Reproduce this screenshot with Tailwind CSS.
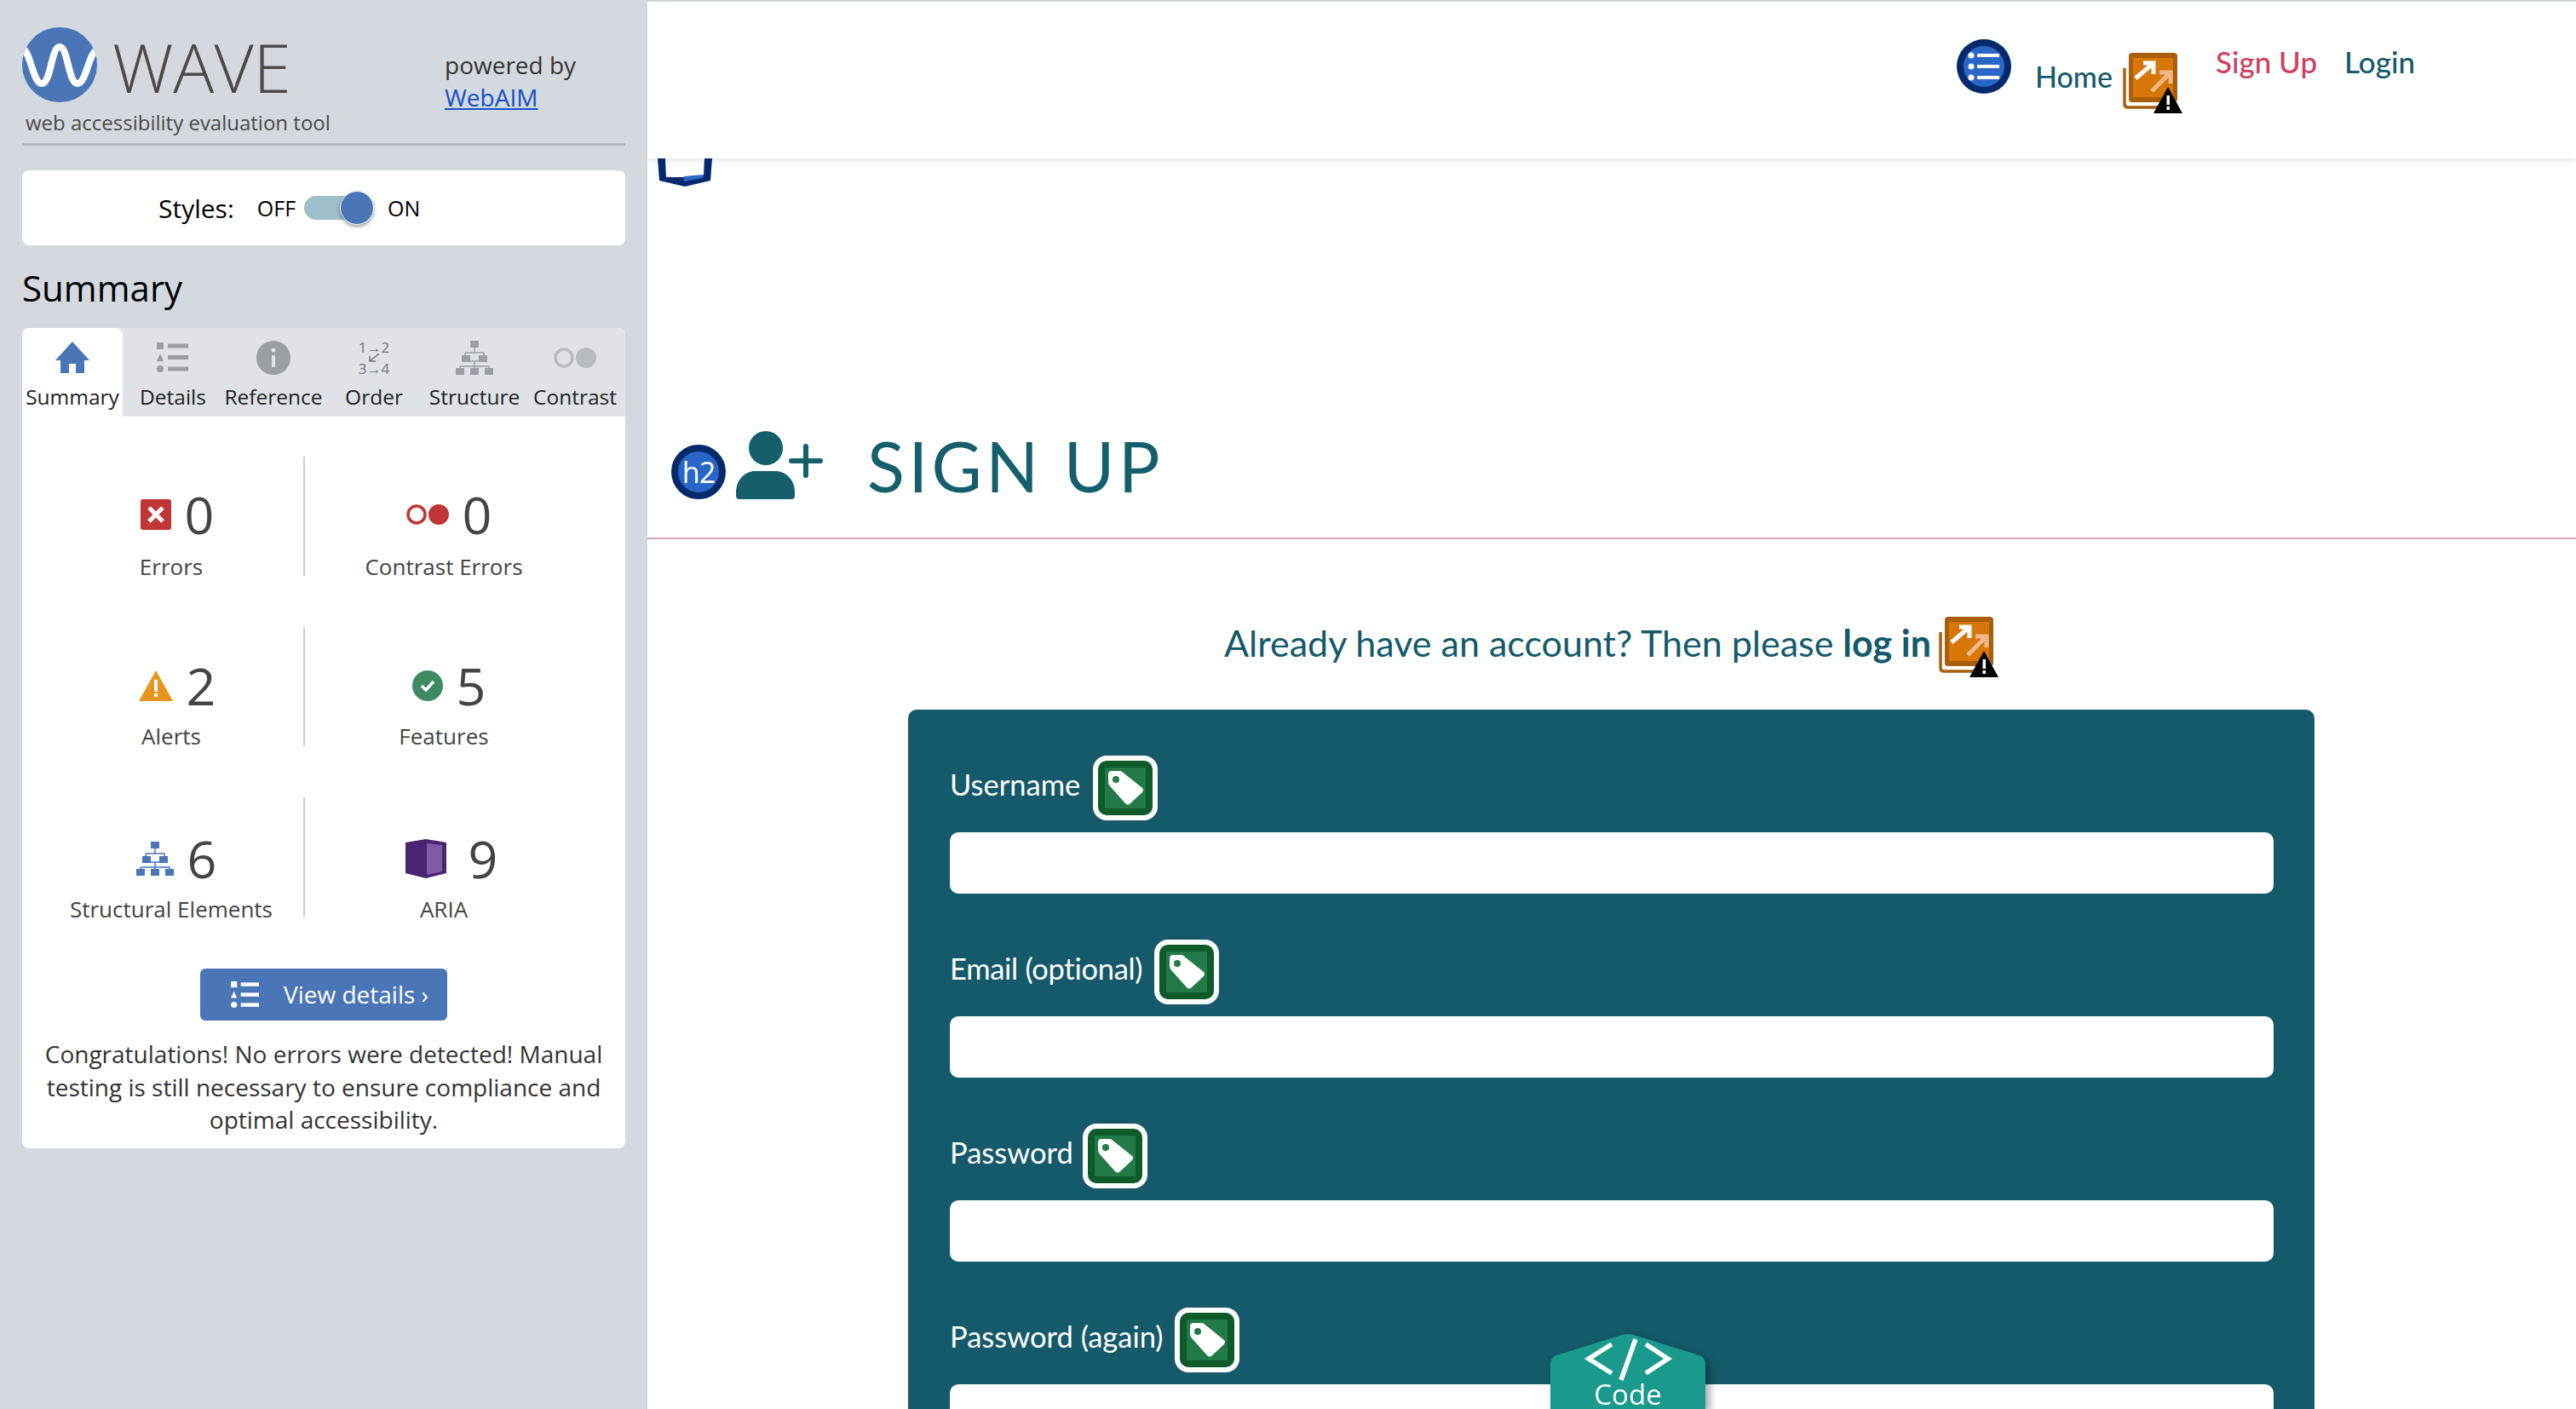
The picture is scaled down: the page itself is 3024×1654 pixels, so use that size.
<!DOCTYPE html>
<html lang="en">
<head>
    <meta charset="UTF-8">
    <title>Sign Up</title>
    <script src="https://cdn.jsdelivr.net/npm/@tailwindcss/browser@4"></script>
</head>
<body class="bg-white">
    <svg width="0" height="0" class="absolute">
        <defs>
            <symbol id="tag" viewBox="0 0 76 76">
                <rect width="76" height="76" rx="16" fill="#fff"/>
                <rect x="6" y="6" width="64" height="64" rx="10" fill="#0d5a2b"/>
                <rect x="14" y="14" width="48" height="48" fill="#217a48"/>
                <path d="M22 18H33L58 38Q60 40 58 43L44 56Q41 59 38 56L21 37Q18 34 18 31V22Q18 18 22 18Z" fill="#fff"/>
                <circle cx="27" cy="28" r="4" fill="#217a48"/>
            </symbol>
            <symbol id="external" viewBox="0 0 72 72">
                <path d="M3 18V60Q3 64 7 64H44" fill="none" stroke="#a85e0c" stroke-width="3.5"/>
                <rect x="8" y="0" width="57" height="58" rx="4" fill="#a85e0c"/>
                <rect x="13" y="6" width="47" height="46" fill="#d9760a"/>
                <path d="M37 25L57 8M46 7H58V20" transform="translate(-21 5)" fill="none" stroke="#fff" stroke-width="5"/>
                <path d="M35 45L56 24M44 23H57V36" fill="none" stroke="#f0b98a" stroke-width="5"/>
                <path d="M54 40L71 71H37Z" fill="#000"/>
                <rect x="52.500" y="50" width="3.500" height="11" fill="#fff"/>
                <rect x="52.500" y="63" width="3.500" height="4" fill="#fff"/>
            </symbol>
            <symbol id="structure" viewBox="0 0 44 40">
                <path d="M22 6V14M11 14H33V24M11 14V24M22 24V30M5 30H39V34M5 30V34M22 30V34M11 24H33" fill="none" stroke="currentColor" stroke-width="1.500"/>
                <rect x="17" y="0" width="10" height="8" fill="currentColor"/>
                <rect x="7" y="17" width="10" height="8" fill="currentColor"/>
                <rect x="27" y="17" width="10" height="8" fill="currentColor"/>
                <rect x="0" y="32" width="10" height="8" fill="currentColor"/>
                <rect x="17" y="32" width="10" height="8" fill="currentColor"/>
                <rect x="34" y="32" width="10" height="8" fill="currentColor"/>
            </symbol>
            <symbol id="details" viewBox="0 0 38 36">
                <rect x="0" y="0" width="8" height="8" fill="currentColor"/>
                <path d="M4 13L8 22H0Z" fill="currentColor"/>
                <circle cx="4" cy="31" r="4" fill="currentColor"/>
                <rect x="13" y="1.500" width="24" height="5" fill="currentColor"/>
                <rect x="13" y="15" width="24" height="5" fill="currentColor"/>
                <rect x="13" y="28.500" width="24" height="5" fill="currentColor"/>
            </symbol>
        </defs>
    </svg>

    <div class="flex h-[1654px] w-[3024px] overflow-hidden">

        <!-- wave sidebar -->
        <div class="w-[760px] h-full shrink-0 bg-[#d3d9de] px-[26px] pt-[32px] font-['Open_Sans',sans-serif]">
            <div class="flex h-[139px] border-b-[3px] border-[#b3b9be]">
                <div class="w-[496px]">
                    <div class="flex">
                        <svg width="88" height="88" viewBox="0 0 88 88" class="shrink-0">
                            <defs><clipPath id="logoClip"><circle cx="44" cy="44" r="44"/></clipPath></defs>
                            <circle cx="44" cy="44" r="44" fill="#4a76b8"/>
                            <path clip-path="url(#logoClip)" d="M-2 24C10 24 12 66 23 66C34 66 34 23 44 23C54 23 54 66 65 66C76 66 78 26 90 26" fill="none" stroke="#fff" stroke-width="8"/>
                        </svg>
                        <span class="ml-[18px] text-[80px] leading-[92px] font-light text-[#4a4a4a]">WAVE</span>
                    </div>
                    <p class="ml-1 mt-[5px] text-[24px] leading-[30px] text-[#4a4a4a]">web accessibility evaluation tool</p>
                </div>
                <div class="pt-[25px] text-[28px] leading-[38px] text-[#333]">
                    <p>powered by</p>
                    <a href="#" class="text-[#1450c8] underline">WebAIM</a>
                </div>
            </div>

            <div class="mt-[29px] h-[88px] rounded-lg bg-white flex items-center pl-[160px]">
                <span class="text-[30px] text-black">Styles:</span>
                <span class="ml-[27px] mt-[1px] text-[25px] text-black">OFF</span>
                <div class="relative ml-[10px] w-[62px] h-[28px] rounded-full bg-[#9fc0cb]">
                    <div class="absolute left-[42px] -top-[6px] w-[40px] h-[40px] rounded-full bg-[#4a76b8] border border-white shadow-[0_2px_4px_rgba(0,0,0,0.4)]"></div>
                </div>
                <span class="ml-[36px] mt-[1px] text-[25px] text-black">ON</span>
            </div>

            <h2 class="mt-[20px] mb-[17px] text-[42px] leading-[60px] text-black">Summary</h2>

            <div class="rounded-lg bg-white">
                <div class="flex h-[104px] rounded-t-lg bg-[#dfe3e7] text-[24.5px] leading-[30px] text-[#222]">
                    <div class="w-[118px] rounded-t-lg bg-white flex flex-col items-center pt-[15px]">
                        <svg width="40" height="40" viewBox="0 0 40 40"><path d="M20 1L40 23H34V38H24V27H16V38H6V23H0Z" fill="#4a76b8"/></svg>
                        <span class="mt-[11px]">Summary</span>
                    </div>
                    <div class="w-[118px] flex flex-col items-center pt-[15px]">
                        <svg width="38" height="40" class="text-[#999fa5]"><use href="#details"/></svg>
                        <span class="mt-[11px]">Details</span>
                    </div>
                    <div class="w-[118px] flex flex-col items-center pt-[15px]">
                        <svg width="40" height="40" viewBox="0 0 40 40">
                            <circle cx="20" cy="20" r="20" fill="#9a9fa4"/>
                            <rect x="18" y="17" width="4" height="14" fill="#dfe3e7"/>
                            <circle cx="20" cy="11" r="2.500" fill="#dfe3e7"/>
                        </svg>
                        <span class="mt-[11px]">Reference</span>
                    </div>
                    <div class="w-[118px] flex flex-col items-center pt-[15px]">
                        <div class="h-[40px] flex flex-col items-center text-[17px] leading-[15px] font-medium text-[#70767c]">
                            <span>1→2</span>
                            <svg width="16" height="10" viewBox="0 0 16 10" class="block"><path d="M14 0L3 9M3 3V9H10" fill="none" stroke="#70767c" stroke-width="1.500"/></svg>
                            <span>3→4</span>
                        </div>
                        <span class="mt-[11px]">Order</span>
                    </div>
                    <div class="w-[118px] flex flex-col items-center pt-[15px]">
                        <svg width="44" height="40" class="text-[#999fa5]"><use href="#structure"/></svg>
                        <span class="mt-[11px]">Structure</span>
                    </div>
                    <div class="w-[118px] flex flex-col items-center pt-[15px]">
                        <svg width="50" height="40" viewBox="0 0 50 40">
                            <circle cx="12" cy="20" r="10" fill="none" stroke="#b7bcc0" stroke-width="3.500"/>
                            <circle cx="38" cy="20" r="12" fill="#b7bcc0"/>
                        </svg>
                        <span class="mt-[11px]">Contrast</span>
                    </div>
                </div>

                <div class="pl-[20px] pt-[47px] grid grid-cols-[312px_326px] gap-y-[60px] text-[#444]">
                    <div class="h-[140px] border-r-2 border-[#c9ced2] flex flex-col items-center pt-[33px]">
                        <div class="ml-[14px] flex items-center gap-[16px] h-[70px]">
                            <svg width="36" height="36" viewBox="0 0 36 36">
                                <rect width="36" height="36" rx="3" fill="#c03535"/>
                                <path d="M10 10L26 26M26 10L10 26" stroke="#fff" stroke-width="5"/>
                            </svg>
                            <span class="text-[61px] leading-[70px]">0</span>
                        </div>
                        <span class="mt-[12px] text-[26px] leading-[28px]">Errors</span>
                    </div>
                    <div class="h-[140px] flex flex-col items-center pt-[33px]">
                        <div class="ml-[12px] flex items-center gap-[16px] h-[70px]">
                            <svg width="50" height="24" viewBox="0 0 50 24">
                                <circle cx="12" cy="12" r="10" fill="none" stroke="#c03535" stroke-width="3.500"/>
                                <circle cx="38" cy="12" r="12" fill="#c03535"/>
                            </svg>
                            <span class="text-[61px] leading-[70px]">0</span>
                        </div>
                        <span class="mt-[12px] text-[26px] leading-[28px]">Contrast Errors</span>
                    </div>
                    <div class="h-[140px] border-r-2 border-[#c9ced2] flex flex-col items-center pt-[34px]">
                        <div class="ml-[14px] flex items-center gap-[16px] h-[70px]">
                            <svg width="40" height="36" viewBox="0 0 40 36">
                                <path d="M20 0L40 36H0Z" fill="#e8951c"/>
                                <rect x="18" y="11" width="4" height="14" fill="#fff"/>
                                <rect x="18" y="27" width="4" height="4" fill="#fff"/>
                            </svg>
                            <span class="text-[61px] leading-[70px]">2</span>
                        </div>
                        <span class="mt-[10px] text-[26px] leading-[28px]">Alerts</span>
                    </div>
                    <div class="h-[140px] flex flex-col items-center pt-[34px]">
                        <div class="ml-[12px] flex items-center gap-[16px] h-[70px]">
                            <svg width="36" height="36" viewBox="0 0 36 36">
                                <circle cx="18" cy="18" r="18" fill="#3d8a63"/>
                                <path d="M11 18L16 23L25 13" fill="none" stroke="#fff" stroke-width="3.500"/>
                            </svg>
                            <span class="text-[61px] leading-[70px]">5</span>
                        </div>
                        <span class="mt-[10px] text-[26px] leading-[28px]">Features</span>
                    </div>
                    <div class="h-[141px] border-r-2 border-[#c9ced2] flex flex-col items-center pt-[37px]">
                        <div class="ml-[12px] flex items-center gap-[16px] h-[70px]">
                            <svg width="44" height="40" class="text-[#4a76b8]"><use href="#structure"/></svg>
                            <span class="text-[61px] leading-[70px]">6</span>
                        </div>
                        <span class="mt-[10px] text-[26px] leading-[28px]">Structural Elements</span>
                    </div>
                    <div class="h-[141px] flex flex-col items-center pt-[37px]">
                        <div class="ml-[18px] flex items-center gap-[26px] h-[70px]">
                            <svg width="48" height="46" viewBox="0 0 48 46">
                                <path d="M0 4L24 0L48 4V40L24 46L0 40Z" fill="#4a2470"/>
                                <path d="M25 5L43 7V38L25 42Z" fill="#7f5ba6"/>
                            </svg>
                            <span class="text-[61px] leading-[70px]">9</span>
                        </div>
                        <span class="mt-[10px] text-[26px] leading-[28px]">ARIA</span>
                    </div>
                </div>

                <div class="mt-[60px] flex justify-center">
                    <div class="w-[290px] h-[61px] rounded-md bg-[#4a76b8] flex items-center pl-[34px] text-white text-[28px]">
                        <svg width="38" height="32" class="text-white"><use href="#details"/></svg>
                        <span class="ml-[26px] mb-[2px]">View details ›</span>
                    </div>
                </div>

                <p class="mt-[20px] pb-[14px] px-4 text-center text-[28px] leading-[38.500px] text-[#333]">Congratulations! No errors were detected! Manual testing is still necessary to ensure compliance and optimal accessibility.</p>
            </div>
        </div>

        <!-- page -->
        <div class="relative flex-1 h-full overflow-hidden border-t-2 border-[#d0d4d8] font-['Lato',sans-serif] text-[#155a6a]">
            <svg width="64" height="33" viewBox="0 0 64 33" class="absolute left-[12px] top-[184px]">
                <path d="M0 0H64L62 26L32 33L2 26Z" fill="#052a6b"/>
                <path d="M9 0H55L54 20L32 22H10Z" fill="#fff"/>
                <path d="M31 21L54 19L53 23L31 27Z" fill="#2a66c8"/>
            </svg>

            <div class="relative h-[184px] bg-white shadow-[0_2px_8px_rgba(0,0,0,0.12)] flex justify-end items-start pr-[189px] text-[35px] font-medium">
                <svg width="64" height="64" viewBox="0 0 64 64" class="mt-[44px]">
                    <circle cx="32" cy="32" r="32" fill="#052a6b"/>
                    <circle cx="32" cy="32" r="24" fill="#2a66c8"/>
                    <circle cx="17" cy="19" r="3.500" fill="#fff"/>
                    <circle cx="17" cy="32" r="3.500" fill="#fff"/>
                    <circle cx="17" cy="45" r="3.500" fill="#fff"/>
                    <rect x="24" y="17" width="26" height="4" fill="#fff"/>
                    <rect x="24" y="30" width="26" height="4" fill="#fff"/>
                    <rect x="24" y="43" width="26" height="4" fill="#fff"/>
                </svg>
                <a href="#" class="ml-[28px] mt-[68px] w-[102px] leading-[40px] text-[34px]">Home</a>
                <svg width="72" height="72" class="mt-[60px]"><use href="#external"/></svg>
                <a href="#" class="ml-[38px] mt-[50px] w-[151px] leading-[40px] text-[#cf3f5f]">Sign Up</a>
                <a href="#" class="mt-[50px] w-[83px] leading-[40px]">Login</a>
            </div>

            <div class="mt-[320px] h-[80px] pl-[28px] flex items-end">
                <div class="w-[64px] h-[64px] mr-[12px] rounded-full border-[8px] border-[#052a6b] bg-[#2a66c8] flex items-center justify-center text-white text-[34px] tracking-[-1px] font-['Open_Sans',sans-serif]">h2</div>
                <svg width="102" height="80" viewBox="0 0 102 80">
                    <circle cx="35" cy="20" r="20" fill="#155f6d"/>
                    <path d="M0 72C0 56 12 47 22 47H47C57 47 69 56 69 72V76Q69 80 65 80H4Q0 80 0 76Z" fill="#155f6d"/>
                    <path d="M82 18V52M65 35H99" stroke="#155f6d" stroke-width="6" stroke-linecap="round"/>
                </svg>
                <h1 class="ml-[52px] mb-[-8px] text-[81px] leading-[94px] font-normal tracking-[4.500px] text-[#155f6d]">SIGN UP</h1>
            </div>

            <div class="mt-[45px] border-t-2 border-[#d9a6b6]"></div>

            <div class="mt-[91px] h-[72px] flex justify-center items-center text-[43px]">
                <span class="mb-[10px]">Already have an account? Then please <b class="font-bold">log in</b></span>
                <svg width="72" height="72" class="ml-[8px]"><use href="#external"/></svg>
            </div>

            <form class="mt-[37px] ml-[306px] w-[1651px] rounded-t-[10px] bg-[#155a6a] pt-[54px] pl-[49px] pr-[48px] text-white text-[34.500px]">
                <div class="flex items-center h-[76px]">
                    <label class="w-[168px] mb-[8px]">Username</label>
                    <svg width="76" height="76"><use href="#tag"/></svg>
                </div>
                <div class="mt-[14px] h-[72px] rounded-[10px] bg-white"></div>

                <div class="mt-[54px] flex items-center h-[76px]">
                    <label class="w-[240px] mb-[8px] tracking-[-0.300px]">Email (optional)</label>
                    <svg width="76" height="76"><use href="#tag"/></svg>
                </div>
                <div class="mt-[14px] h-[72px] rounded-[10px] bg-white"></div>

                <div class="mt-[54px] flex items-center h-[76px]">
                    <label class="w-[156px] mb-[8px]">Password</label>
                    <svg width="76" height="76"><use href="#tag"/></svg>
                </div>
                <div class="mt-[14px] h-[72px] rounded-[10px] bg-white"></div>

                <div class="mt-[54px] flex items-center h-[76px]">
                    <label class="w-[264px] mb-[8px]">Password (again)</label>
                    <svg width="76" height="76"><use href="#tag"/></svg>
                </div>
                <div class="mt-[14px] h-[72px] rounded-[10px] bg-white"></div>
            </form>

            <!-- code tab -->
            <div class="absolute left-[1060px] top-[1563px] w-[182px] h-[89px] drop-shadow-[5px_4px_5px_rgba(0,0,0,0.35)] font-['Open_Sans',sans-serif]">
                <svg width="182" height="89" viewBox="0 0 182 89" class="absolute inset-0">
                    <path d="M0 89V36Q0 29 7 26L84 2Q91 0 98 2L175 26Q182 29 182 36V89Z" fill="#1a9a8c"/>
                    <path d="M72 13L45 30L72 47M112 13L138 30L112 47M100 7L83 55" fill="none" stroke="#fff" stroke-width="5.500"/>
                </svg>
                <span class="absolute left-0 right-0 top-[56px] text-center text-white text-[33px] leading-[32px]">Code</span>
            </div>
        </div>
    </div>
</body>
</html>
